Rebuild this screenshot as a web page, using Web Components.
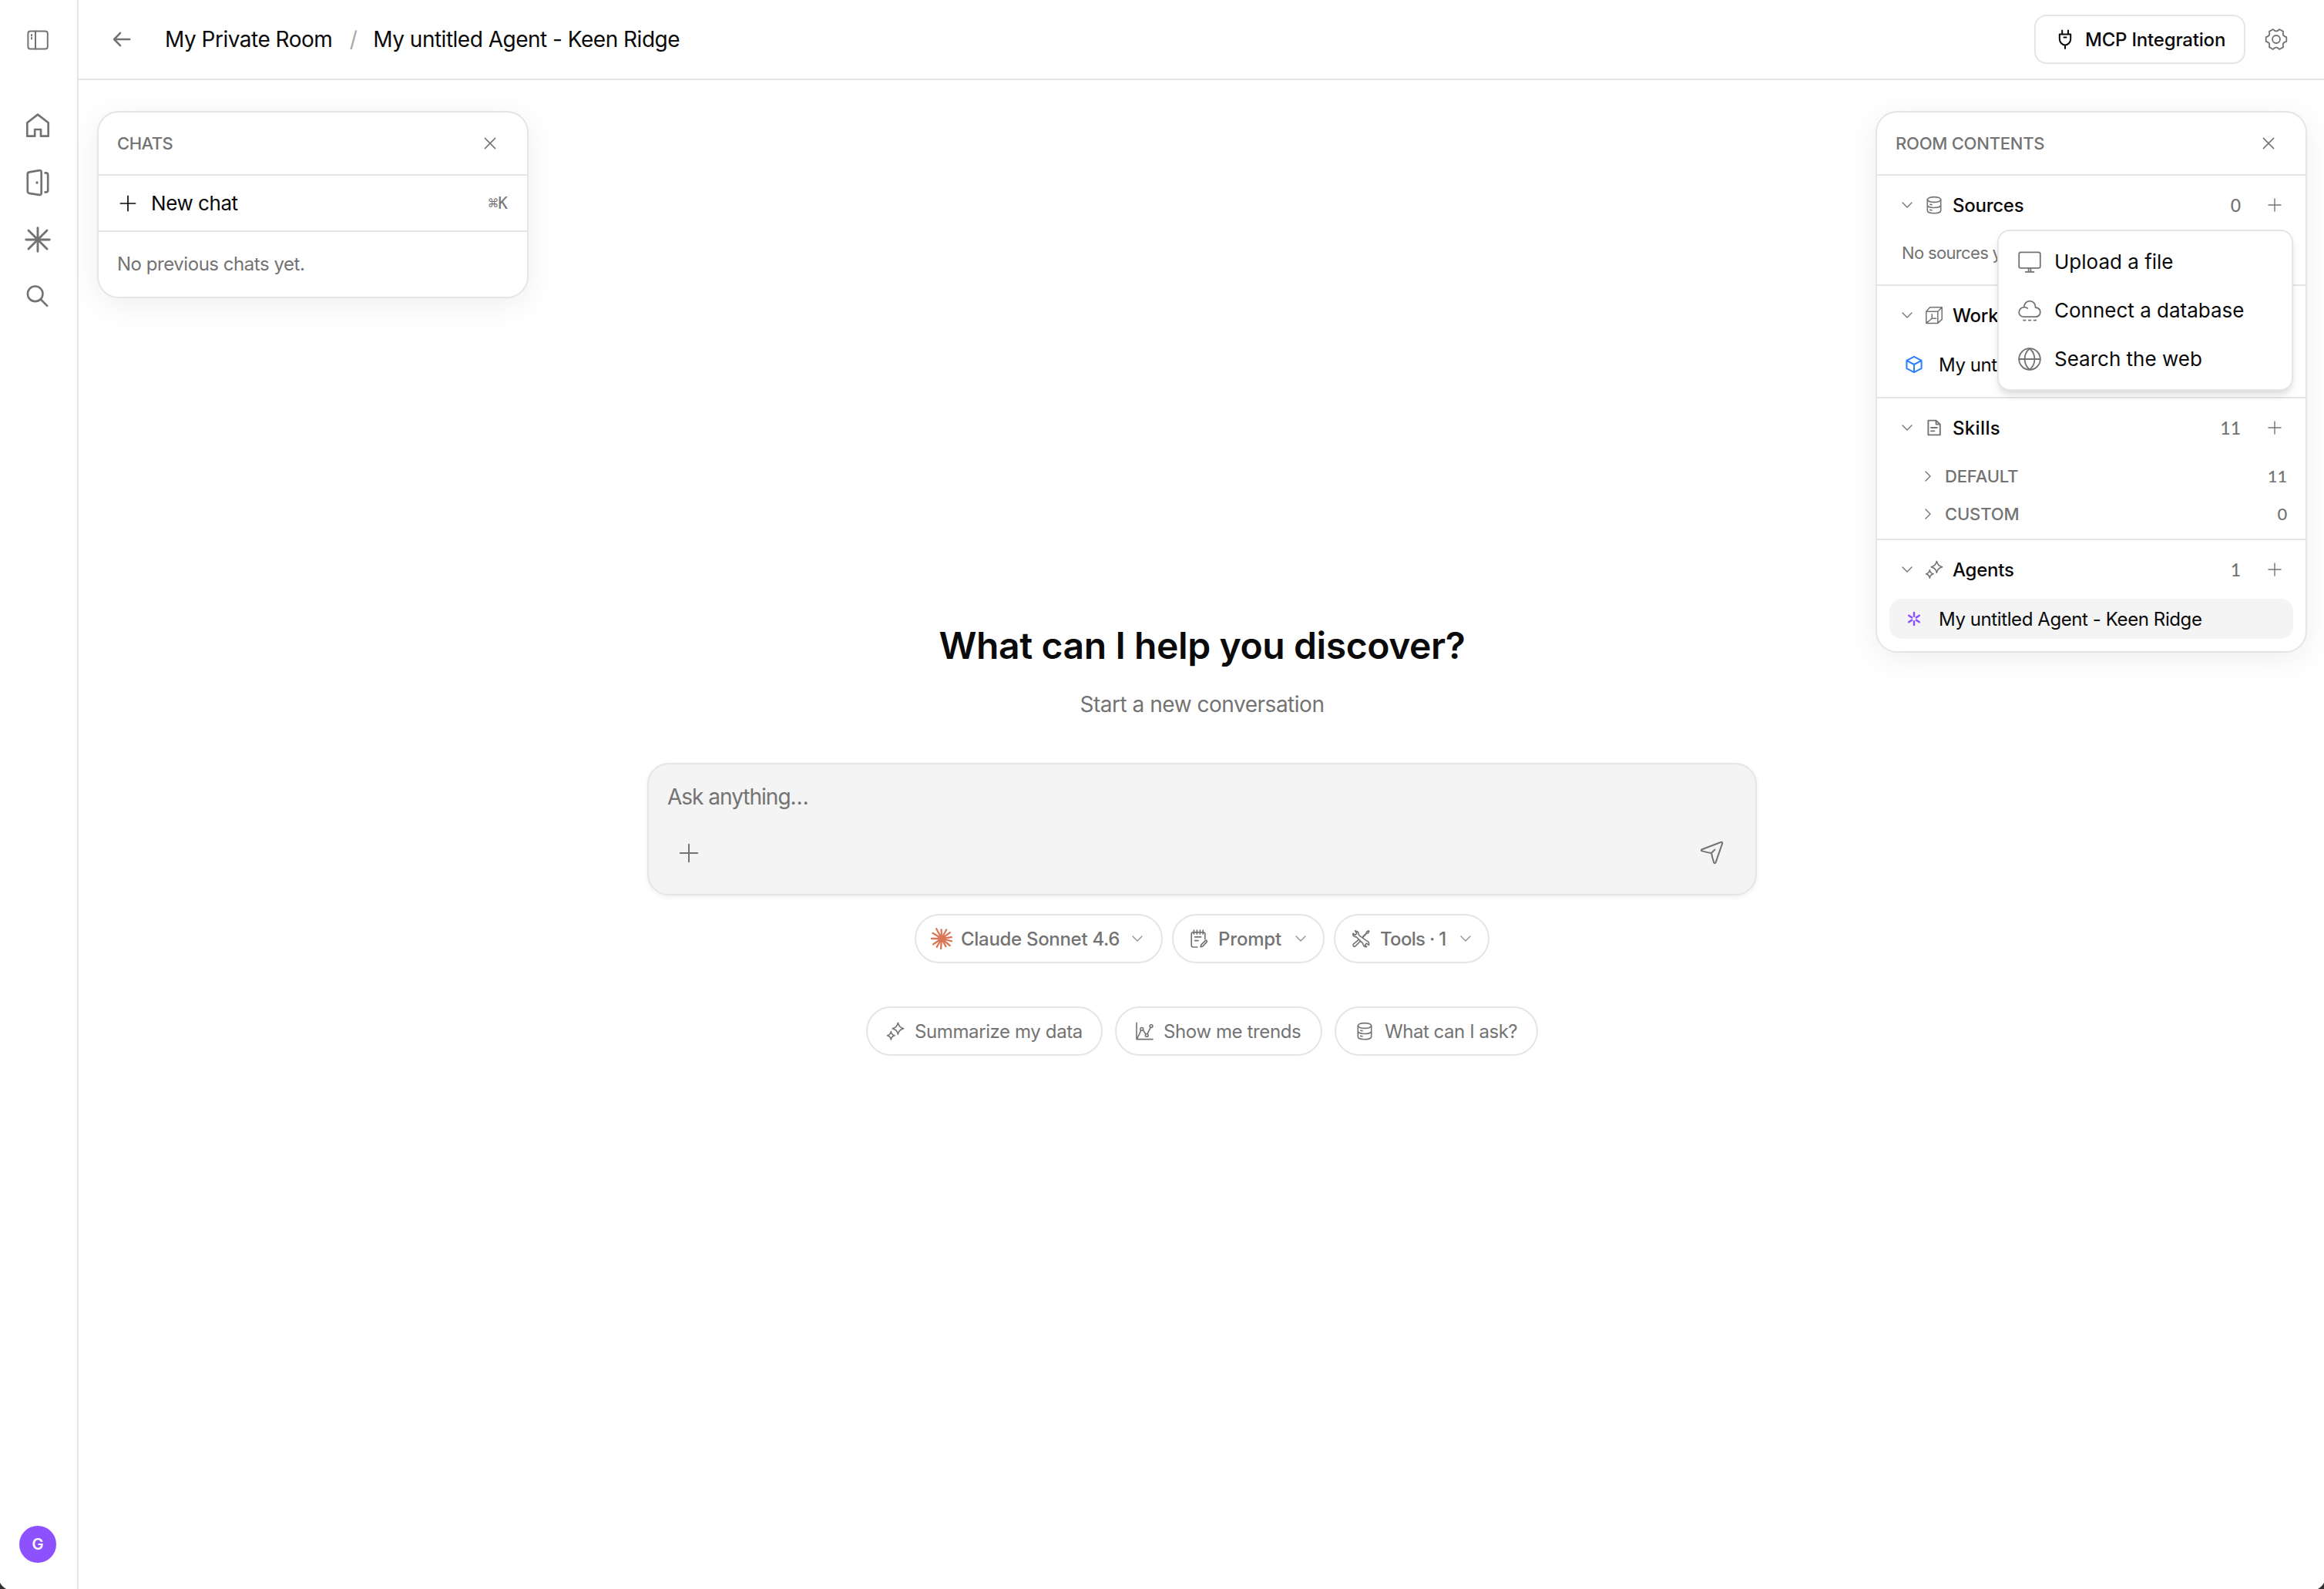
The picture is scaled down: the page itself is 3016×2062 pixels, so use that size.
<!DOCTYPE html>
<html lang="en">
<head>
<meta charset="utf-8">
<title>My untitled Agent - Keen Ridge</title>
<style>
  html, body {
    height: 100%;
    margin: 0;
  }
  body {
    background: #fff;
    color: #0a0a0a;
    font-family: Inter, "Liberation Sans", sans-serif;
    overflow: hidden;
    --muted: #737373;
    --line: #e5e5e5;
    --fill: #f4f4f4;
  }
</style>
</head>
<body>
<room-app></room-app>

<script>
// outline of the settings cog: six flat teeth joined by scalloped valleys
function cogPath(c) {
  const at = (r, deg) => {
    const a = (deg * Math.PI) / 180;
    return `${(c + r * Math.cos(a)).toFixed(2)} ${(c + r * Math.sin(a)).toFixed(2)}`;
  };
  let d = "";
  for (let i = 0; i < 6; i++) {
    const a = i * 60;
    d += `${i ? "L" : "M"}${at(13.6, a - 12)}L${at(13.6, a + 12)}L${at(11.8, a + 18)}Q${at(9.6, a + 30)} ${at(11.8, a + 42)}`;
  }
  return d + "z";
}

// rays of the model logo, as [angle, length]
const rays = [
  [-92, 11.5], [-62, 13], [-118, 14.5], [-36, 13.5], [-8, 13],
  [14, 13.5], [40, 14], [62, 11.5], [94, 13.5], [120, 12.5],
  [146, 13], [180, 13], [-148, 13.5]
].map(([deg, to]) => {
  const a = (deg * Math.PI) / 180;
  return `M14 14L${(14 + to * Math.cos(a)).toFixed(2)} ${(14 + to * Math.sin(a)).toFixed(2)}`;
}).join("");

const database = `<ellipse cx="12" cy="5" rx="8.7" ry="3.4"/><path d="M3.3 5V19.2C3.3 21.2 7 22.7 12 22.7S20.7 21.2 20.7 19.2V5M3.3 12C3.3 14 7 15.5 12 15.5S20.7 14 20.7 12M6.8 11.2L9 11.6M6.8 18.4L9 18.8"/>`;
const sparkles = `<path d="M15.4 1.2C16.1 5.4 18 7.6 22.6 8.7 18 9.8 16.1 12 15.4 16.2 14.7 12 12.8 9.8 8.2 8.7 12.8 7.6 14.7 5.4 15.4 1.2zM6.3 12.6C6.8 15.6 8 17 11 17.8 8 18.6 6.8 20 6.3 23 5.8 20 4.6 18.6 1.6 17.8 4.6 17 5.8 15.6 6.3 12.6z"/>`;

// name: [viewBox size, stroke width, markup]
const ICONS = {
  panel: [40, 2, `<rect x="7.4" y="8.6" width="25.4" height="23" rx="3"/><path d="M17 8.6V31.6M12 13V14.6M12 17V18.6"/>`],
  home: [40, 2.7, `<path d="M6.3 33.7V16.3L20 5.6 33.7 16.3V33.7H24V25H16.2V33.7z"/>`],
  door: [40, 2.7, `<path d="M9 6.4L22 4.1Q24.7 3.7 24.7 6.4V33.6Q24.7 36.2 22 35.8L9 33.8Q6.8 33.3 6.8 31V9Q6.8 6.8 9 6.4zM29.6 7.4H30.6Q33.2 7.4 33.2 10V30Q33.2 32.4 30.6 32.4H29.6"/><circle cx="19" cy="20" r="1.7" fill="currentColor" stroke="none"/>`],
  star: [40, 2.9, `<path d="M20 4.8V35.2M4.8 20H35.2M8 8L32 32M32 8L8 32"/>`],
  search: [40, 2.6, `<circle cx="16.7" cy="16.3" r="9.8"/><path d="M23.9 23.5L32.2 31.8"/>`],
  back: [40, 2.6, `<path d="M30.2 20H10.4M18 11.8L10.2 20 18 28.2"/>`],
  plug: [32, 2, `<path d="M8.8 9.5H23.2V15.6C23.2 19.5 20 23.4 16 23.4S8.8 19.5 8.8 15.6zM12.2 4.4V9M20 4.4V9M14.5 13.4H17.5M16 23.4V28"/>`],
  cog: [40, 1.8, `<path d="${cogPath(20)}"/><circle cx="20" cy="20" r="5"/>`],
  close: [24, 1.5, `<path d="M5.4 5.4L18.6 18.6M18.6 5.4L5.4 18.6"/>`],
  plus: [24, 1.7, `<path d="M12 2.4V21.6M2.4 12H21.6"/>`],
  down: [24, 1.4, `<path d="M6 9L12 15 18 9"/>`],
  right: [24, 1.4, `<path d="M9 6L15 12 9 18"/>`],
  database: [24, 1.6, database],
  sparkles: [24, 1.6, sparkles],
  box: [24, 1.5, `<path d="M1.8 7.2H16.8V22.4H1.8zM1.8 7.2L6.6 1.8H22.2L16.8 7.2M22.2 1.8V17.4L16.8 22.4M9.2 10.8V16.2H14.6M9.2 16.2L1.8 22.4"/>`],
  cube: [24, 2, `<path d="M12 1.8L21.6 6.8V17.2L12 22.2 2.4 17.2V6.8zM2.4 6.8L12 12 21.6 6.8M12 12V22.2"/>`],
  doc: [24, 1.9, `<path d="M4.4 2.6H14.6L19.8 7.6V21.4H4.4zM14.6 2.6V7.6H19.8M8 12H15.8M8 16.4H12.4"/>`],
  burst: [24, 2.5, `<path d="M12 4V8.8M12 15.2V20M5.2 7.8L9.2 10.4M14.8 13.6L18.8 16.2M18.8 7.8L14.8 10.4M9.2 13.6L5.2 16.2"/>`],
  monitor: [32, 1.8, `<rect x="2.2" y="3.4" width="27.6" height="20.4" rx="2.4"/><path d="M14.6 24V28.4M17.4 24V28.4M10.6 28.8H21.4"/>`],
  cloud: [32, 1.8, `<path d="M8.6 24.2C4.6 24.2 2.2 21.4 2.2 18.2 2.2 14.6 5 11.8 8.6 11.6 9 7 12 3.6 16 3.6 20.4 3.6 23.6 7 23.6 12 27.4 12.4 29.8 15 29.8 18.2 29.8 21.6 27 24.2 23.6 24.2zM8.6 11.6C10.4 11.4 12 12 13.2 13M8 28.6H10.6M14.8 28.6H17.4M21.6 28.6H24.2"/>`],
  globe: [32, 1.8, `<circle cx="16" cy="16" r="13.8"/><path d="M2.2 16H29.8M16 2.2C7.4 9.6 7.4 22.4 16 29.8 24.6 22.4 24.6 9.6 16 2.2z"/>`],
  send: [32, 2, `<path d="M28.6 1.8C29.8 1.5 30.5 2.3 30.2 3.4L21.6 28.2C21.1 29.5 19.6 29.5 19.2 28.2 18 24.6 16.9 20.8 16 16 11.4 15.2 7.2 14.4 3.8 13.4 2.5 13 2.5 11.7 3.8 11.2zM16 16L20.4 11.6"/>`],
  claude: [28, 2.3, `<path d="${rays}"/>`],
  prompt: [24, 1.7, `<path d="M19.8 12.4V6Q19.8 3.8 17.6 3.8H4.4Q2.2 3.8 2.2 6V20.6Q2.2 23 4.6 23H9.8M5.4 1.2V6M9.4 1.2V6M13.4 1.2V6M17.2 1.2V6M6.6 9.8H14.6M6.6 14.6H11M20.2 14.6C21.4 13.6 23 15 22 16.4L17 22 14.2 22.8 15 19.8z"/>`],
  tools: [24, 1.6, `<path d="M4.6 1.8L8.4 3.4 9.6 7.6 19.6 14.8C22 15.4 23.2 17.8 22.4 20.4L19.4 18.2 17.4 20.2 19.6 22.6C16.6 23 14.6 21 14.8 18.4L6.2 9.8C3.6 10.2 1.6 8 1.8 5.2L4.6 7.4 6.8 5.4 4.6 1.8M14.8 9.4L19.2 5 19.6 3.2 22 1.8 22.8 2.8 21.2 5 19.6 5.2 15.4 9.8M9.6 13.2L2.4 19.2C1.2 20.4 2.8 23.2 4.8 22L11.4 15.4"/>`],
  chart: [24, 1.6, `<path d="M2 1.4V22.6H23M2.6 22L7.8 11.2M10.2 10.4L14 16M16.2 15.4L20.2 7.4"/><circle cx="8.8" cy="9.4" r="1.9"/><circle cx="15.2" cy="17.4" r="1.9"/><circle cx="21" cy="5.6" r="1.9"/>`]
};

class UiIcon extends HTMLElement {
  connectedCallback() {
    const [box, stroke, markup] = ICONS[this.getAttribute("name")];
    const size = this.getAttribute("size") || box;
    this.attachShadow({ mode: "open" }).innerHTML = `
      <style>
        :host {
          display: inline-flex;
          flex: none;
        }
        svg {
          display: block;
          fill: none;
          stroke: currentColor;
          stroke-linecap: round;
          stroke-linejoin: round;
        }
      </style>
      <svg width="${size}" height="${size}" viewBox="0 0 ${box} ${box}" stroke-width="${this.getAttribute("stroke") || stroke}">${markup}</svg>
    `;
  }
}

class NavRail extends HTMLElement {
  constructor() {
    super();
    this.attachShadow({ mode: "open" }).innerHTML = `
      <style>
        :host {
          display: flex;
          flex-direction: column;
          align-items: center;
          box-sizing: border-box;
          width: 102px;
          padding: 32px 2px 34px 0;
          border-right: 2px solid var(--line);
          color: var(--muted);
        }
        nav {
          display: flex;
          flex-direction: column;
          gap: 34px;
          margin-top: 71px;
        }
        .avatar {
          display: flex;
          align-items: center;
          justify-content: center;
          width: 48px;
          height: 48px;
          margin-top: auto;
          border-radius: 50%;
          background: #8e51ff;
          color: #fff;
          font-size: 20px;
          font-weight: 600;
        }
      </style>
      <ui-icon name="panel"></ui-icon>
      <nav>
        <ui-icon name="home"></ui-icon>
        <ui-icon name="door"></ui-icon>
        <ui-icon name="star"></ui-icon>
        <ui-icon name="search"></ui-icon>
      </nav>
      <div class="avatar">G</div>
    `;
  }
}

class TopBar extends HTMLElement {
  constructor() {
    super();
    this.attachShadow({ mode: "open" }).innerHTML = `
      <style>
        :host {
          display: flex;
          align-items: center;
          box-sizing: border-box;
          height: 104px;
          padding: 0 42px 0 36px;
          border-bottom: 2px solid var(--line);
          font-size: 28px;
        }
        ui-icon {
          color: var(--muted);
        }
        .crumb {
          letter-spacing: -0.5px;
          white-space: nowrap;
        }
        .room {
          margin-left: 36px;
        }
        .slash {
          box-sizing: border-box;
          width: 53px;
          padding-left: 2px;
          color: #a8a8a8;
          text-align: center;
        }
        button {
          display: flex;
          align-items: center;
          gap: 10px;
          box-sizing: border-box;
          width: 274px;
          height: 64px;
          margin: 0 20px 0 auto;
          padding: 0 0 0 22px;
          border: 2px solid var(--line);
          border-radius: 16px;
          background: #fff;
          color: inherit;
          font: 500 24px Inter, sans-serif;
          letter-spacing: -0.2px;
        }
        button ui-icon {
          color: inherit;
        }
      </style>
      <ui-icon name="back"></ui-icon>
      <span class="crumb room">My Private Room</span>
      <span class="slash">/</span>
      <span class="crumb">My untitled Agent - Keen Ridge</span>
      <button><ui-icon name="plug"></ui-icon>MCP Integration</button>
      <ui-icon name="cog"></ui-icon>
    `;
  }
}

class FloatPanel extends HTMLElement {
  constructor() {
    super();
    this.attachShadow({ mode: "open" }).innerHTML = `
      <style>
        :host {
          display: block;
          box-sizing: border-box;
          border: 2px solid var(--line);
          border-radius: 28px;
          background: #fff;
          box-shadow: 0 8px 40px rgba(0, 0, 0, 0.07);
        }
        header {
          display: flex;
          align-items: center;
          justify-content: space-between;
          height: 80px;
          padding: 0 36px 0 24px;
          color: var(--muted);
          font-size: 22px;
          font-weight: 500;
        }
      </style>
      <header><slot name="title"></slot><ui-icon name="close" size="24"></ui-icon></header>
      <slot></slot>
    `;
  }
}

class ChatsPanel extends HTMLElement {
  constructor() {
    super();
    this.attachShadow({ mode: "open" }).innerHTML = `
      <style>
        :host {
          display: block;
        }
        .title {
          letter-spacing: -0.5px;
        }
        .new {
          display: flex;
          align-items: center;
          height: 71px;
          padding: 0 25px 0 26px;
          border: solid var(--line);
          border-width: 2px 0;
          font-size: 26px;
          letter-spacing: -0.45px;
        }
        .new span {
          margin-left: 18px;
        }
        kbd {
          margin-left: auto;
          color: var(--muted);
          font: 21px "DejaVu Sans Mono", monospace;
          letter-spacing: 0;
        }
        p {
          margin: 0;
          padding: 0 24px;
          color: var(--muted);
          font-size: 24px;
          letter-spacing: -0.46px;
          line-height: 84px;
        }
      </style>
      <float-panel>
        <span slot="title" class="title">CHATS</span>
        <div class="new"><ui-icon name="plus"></ui-icon><span>New chat</span><kbd>⌘K</kbd></div>
        <p>No previous chats yet.</p>
      </float-panel>
    `;
  }
}

class RoomSection extends HTMLElement {
  connectedCallback() {
    const get = name => this.getAttribute(name);
    this.attachShadow({ mode: "open" }).innerHTML = `
      <style>
        :host {
          display: block;
          position: relative;
          border-top: 2px solid var(--line);
        }
        .head {
          display: flex;
          align-items: center;
          height: 76px;
          padding: 0 30px 0 27px;
          color: var(--muted);
        }
        .icon {
          margin: 0 12px 0 11px;
        }
        .label {
          color: #0a0a0a;
          font-size: 24px;
          font-weight: 500;
          letter-spacing: ${get("spacing") || "-0.25px"};
        }
        .count {
          margin: 0 34px 0 auto;
          font: 500 23px Lato, sans-serif;
        }
      </style>
      <div class="head">
        <ui-icon name="down"></ui-icon>
        <ui-icon class="icon" name="${get("icon")}"></ui-icon>
        <span class="label">${get("label")}</span>
        ${get("count") ? `<span class="count">${get("count")}</span><ui-icon name="plus" size="20"></ui-icon>` : ""}
      </div>
      <slot></slot>
    `;
  }
}

class RoomItem extends HTMLElement {
  constructor() {
    super();
    this.attachShadow({ mode: "open" }).innerHTML = `
      <style>
        :host {
          display: flex;
          align-items: center;
          gap: 20px;
          height: 52px;
          margin: 0 16px 16px;
          padding: 0 20px;
          border-radius: 16px;
          font-size: 24px;
          letter-spacing: -0.41px;
          white-space: nowrap;
        }
        :host([active]) {
          background: var(--fill);
        }
      </style>
      <slot></slot>
    `;
  }
}

class SkillGroup extends HTMLElement {
  connectedCallback() {
    this.attachShadow({ mode: "open" }).innerHTML = `
      <style>
        :host {
          display: flex;
          align-items: center;
          gap: 10px;
          height: 49px;
          padding: 0 24px 0 54px;
          color: var(--muted);
          font-size: 22px;
          font-weight: 500;
          letter-spacing: -0.15px;
        }
        .count {
          margin-left: auto;
          font: 500 22px Lato, sans-serif;
        }
      </style>
      <ui-icon name="right"></ui-icon>
      <slot></slot>
      <span class="count">${this.getAttribute("count")}</span>
    `;
  }
}

class SourceMenu extends HTMLElement {
  constructor() {
    super();
    this.attachShadow({ mode: "open" }).innerHTML = `
      <style>
        :host {
          display: block;
          position: absolute;
          z-index: 2;
          top: 70px;
          right: 16px;
          box-sizing: border-box;
          width: 384px;
          padding: 8px;
          border: 2px solid var(--line);
          border-radius: 16px;
          background: #fff;
          box-shadow: 0 8px 12px -2px rgba(0, 0, 0, 0.1), 0 4px 8px -4px rgba(0, 0, 0, 0.1);
        }
        div {
          display: flex;
          align-items: center;
          gap: 16px;
          height: 63px;
          padding: 0 16px;
          font-size: 26px;
        }
        ui-icon {
          color: var(--muted);
        }
      </style>
      <div><ui-icon name="monitor"></ui-icon>Upload a file</div>
      <div><ui-icon name="cloud"></ui-icon>Connect a database</div>
      <div><ui-icon name="globe"></ui-icon>Search the web</div>
    `;
  }
}

class RoomContents extends HTMLElement {
  constructor() {
    super();
    this.attachShadow({ mode: "open" }).innerHTML = `
      <style>
        :host {
          display: block;
        }
        .title {
          letter-spacing: -0.24px;
        }
        .empty {
          margin: 0;
          padding: 0 32px 17px;
          color: var(--muted);
          font-size: 22px;
          letter-spacing: -0.66px;
          line-height: 48px;
        }
        .groups {
          padding-bottom: 8px;
        }
      </style>
      <float-panel>
        <span slot="title" class="title">ROOM CONTENTS</span>
        <room-section icon="database" label="Sources" count="0">
          <p class="empty">No sources yet.</p>
          <source-menu></source-menu>
        </room-section>
        <room-section icon="box" label="Works">
          <room-item><ui-icon name="cube" style="color:#2b7fff"></ui-icon>My untitled</room-item>
        </room-section>
        <room-section icon="doc" label="Skills" count="11" spacing="0.35px">
          <div class="groups">
            <skill-group count="11">DEFAULT</skill-group>
            <skill-group count="0">CUSTOM</skill-group>
          </div>
        </room-section>
        <room-section icon="sparkles" label="Agents" count="1">
          <room-item active><ui-icon name="burst" style="color:#8e51ff"></ui-icon>My untitled Agent - Keen Ridge</room-item>
        </room-section>
      </float-panel>
    `;
  }
}

class ChatComposer extends HTMLElement {
  constructor() {
    super();
    this.attachShadow({ mode: "open" }).innerHTML = `
      <style>
        :host {
          display: flex;
          flex-direction: column;
          justify-content: space-between;
          box-sizing: border-box;
          width: 1440px;
          height: 172px;
          padding: 22px 41px 37px 24px;
          border: 2px solid var(--line);
          border-radius: 28px;
          background: var(--fill);
          box-shadow: 0 2px 6px rgba(0, 0, 0, 0.07);
          color: var(--muted);
        }
        .hint {
          font-size: 28px;
          letter-spacing: -1px;
          line-height: 40px;
        }
        .actions {
          display: flex;
          align-items: center;
          justify-content: space-between;
          padding-left: 14px;
        }
      </style>
      <div class="hint">Ask anything…</div>
      <div class="actions"><ui-icon name="plus" size="28"></ui-icon><ui-icon name="send"></ui-icon></div>
    `;
  }
}

class PillButton extends HTMLElement {
  connectedCallback() {
    const menu = this.hasAttribute("menu");
    this.attachShadow({ mode: "open" }).innerHTML = `
      <style>
        :host {
          display: flex;
          align-items: center;
          gap: ${menu ? 11 : 13}px;
          box-sizing: border-box;
          height: 64px;
          padding: 0 ${menu ? 19 : 24}px;
          border: 2px solid var(--line);
          border-radius: 32px;
          background: #fff;
          color: var(--muted);
          font-size: 24px;
          font-weight: ${menu ? 500 : 400};
          letter-spacing: -0.39px;
          white-space: nowrap;
        }
        .arrow {
          margin-left: auto;
          opacity: 0.8;
        }
      </style>
      <ui-icon name="${this.getAttribute("icon")}"${this.getAttribute("icon") == "claude" ? ' style="color:#d97757"' : ""}></ui-icon>
      <slot></slot>
      ${menu ? '<ui-icon class="arrow" name="down" stroke="1.3"></ui-icon>' : ""}
    `;
  }
}

class ChatHero extends HTMLElement {
  constructor() {
    super();
    this.attachShadow({ mode: "open" }).innerHTML = `
      <style>
        :host {
          display: flex;
          flex-direction: column;
          align-items: center;
          padding-top: 664px;
        }
        h1 {
          margin: 0;
          font-size: 48px;
          font-weight: 600;
          letter-spacing: -0.39px;
          line-height: 60px;
        }
        p {
          margin: 26px 0 56px;
          color: var(--muted);
          font-size: 28px;
          letter-spacing: -0.48px;
          line-height: 40px;
        }
        .row {
          display: flex;
          gap: 12px;
          margin-top: 24px;
        }
        .asks {
          gap: 16px;
          margin-top: 56px;
        }
      </style>
      <h1>What can I help you discover?</h1>
      <p>Start a new conversation</p>
      <chat-composer></chat-composer>
      <div class="row">
        <pill-button menu icon="claude" style="width:322px;letter-spacing:-0.3px">Claude Sonnet 4.6</pill-button>
        <pill-button menu icon="prompt" style="width:198px;padding-left:21px;gap:13px;letter-spacing:-0.17px">Prompt</pill-button>
        <pill-button menu icon="tools" style="width:202px;padding-left:21px;gap:13px;letter-spacing:-0.69px">Tools · 1</pill-button>
      </div>
      <div class="row asks">
        <pill-button icon="sparkles" style="width:307px">Summarize my data</pill-button>
        <pill-button icon="chart" style="width:269px">Show me trends</pill-button>
        <pill-button icon="database" style="width:264px;padding-left:25px;gap:14px;letter-spacing:-0.46px">What can I ask?</pill-button>
      </div>
    `;
  }
}

class RoomApp extends HTMLElement {
  constructor() {
    super();
    this.attachShadow({ mode: "open" }).innerHTML = `
      <style>
        :host {
          display: grid;
          grid-template: 104px 1fr / 102px 1fr;
          position: relative;
          height: 100vh;
        }
        nav-rail {
          grid-row: 1 / 3;
        }
        main {
          display: grid;
          grid-template-columns: 560px 1fr 560px;
          align-items: start;
          padding: 40px 22px 0 24px;
        }
        chat-hero {
          min-width: 0;
        }
        /* dark slivers behind the rounded window corners */
        .corner {
          position: absolute;
          bottom: 0;
          width: 8px;
          height: 8px;
        }
        .left {
          left: 0;
          background: radial-gradient(circle at 18px -10px, transparent 20px, #333 21px);
        }
        .right {
          right: 0;
          background: radial-gradient(circle at -10px -10px, transparent 20px, #333 21px);
        }
      </style>
      <nav-rail></nav-rail>
      <top-bar></top-bar>
      <main>
        <chats-panel></chats-panel>
        <chat-hero></chat-hero>
        <room-contents></room-contents>
      </main>
      <div class="corner left"></div>
      <div class="corner right"></div>
    `;
  }
}

customElements.define("ui-icon", UiIcon);
customElements.define("nav-rail", NavRail);
customElements.define("top-bar", TopBar);
customElements.define("float-panel", FloatPanel);
customElements.define("chats-panel", ChatsPanel);
customElements.define("room-section", RoomSection);
customElements.define("room-item", RoomItem);
customElements.define("skill-group", SkillGroup);
customElements.define("source-menu", SourceMenu);
customElements.define("room-contents", RoomContents);
customElements.define("chat-composer", ChatComposer);
customElements.define("pill-button", PillButton);
customElements.define("chat-hero", ChatHero);
customElements.define("room-app", RoomApp);
</script>
</body>
</html>
